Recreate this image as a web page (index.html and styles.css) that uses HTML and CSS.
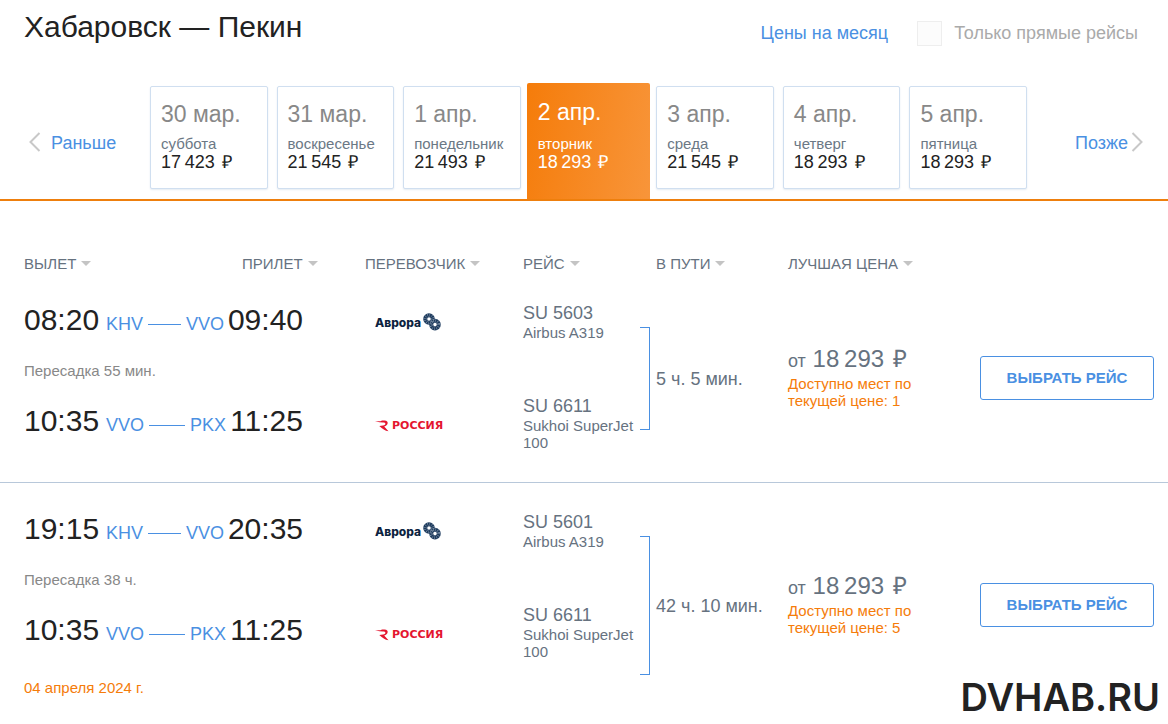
FILE: index.html
```
<!DOCTYPE html>
<html lang="ru">
<head>
<meta charset="utf-8">
<title>Хабаровск — Пекин</title>
<link rel="stylesheet" href="styles.css">
</head>
<body>
<svg class="sprite" aria-hidden="true">
  <symbol id="aurora" viewBox="0 0 18 18">
    <g fill="none" stroke="#1d3a5c" stroke-width="4">
      <circle cx="6" cy="6" r="3.8"/>
      <circle cx="12" cy="11.6" r="3.8"/>
    </g>
    <g fill="none" stroke="#9fb0c2" stroke-width="3.6" stroke-dasharray="0.4 1.6">
      <circle cx="6" cy="6" r="3.8"/>
      <circle cx="12" cy="11.6" r="3.8"/>
    </g>
  </symbol>
  <symbol id="rossiya" viewBox="0 0 14 12">
    <path fill="#e4152f" d="M0 1.2 5.500 1.200 7 .5 9.500.5C12 .6 13 1.800 12.600 3.400 12.300 4.800 11.200 5.800 9.200 6.400L13.500 11.300C10 10.800 7.500 8.800 4.300 5.900L8 5.600C9.800 5.400 10.500 4.600 10.400 3.600 10.300 2.900 9.500 2.600 8 2.500L4.500 2.300Z"/>
  </symbol>
</svg>

<header class="top">
  <h1 class="title">Хабаровск — Пекин</h1>
  <div class="options">
    <a class="link" href="#">Цены на месяц</a>
    <label class="direct"><input class="direct-box" type="checkbox" disabled>Только прямые рейсы</label>
  </div>
</header>

<nav class="dates">
  <a class="link step step-prev" href="#"><svg class="chevron" viewBox="0 0 12 20"><path d="M11 1 2 10l9 9"/></svg>Раньше</a>
  <div class="days">
    <button class="day"><span class="date">30 мар.</span><span class="weekday">суббота</span><span class="fare">17&#8201;423 <span class="rub">₽</span></span></button>
    <button class="day"><span class="date">31 мар.</span><span class="weekday">воскресенье</span><span class="fare">21&#8201;545 <span class="rub">₽</span></span></button>
    <button class="day"><span class="date">1 апр.</span><span class="weekday">понедельник</span><span class="fare">21&#8201;493 <span class="rub">₽</span></span></button>
    <button class="day day-active"><span class="date">2 апр.</span><span class="weekday">вторник</span><span class="fare">18&#8201;293 <span class="rub">₽</span></span></button>
    <button class="day"><span class="date">3 апр.</span><span class="weekday">среда</span><span class="fare">21&#8201;545 <span class="rub">₽</span></span></button>
    <button class="day"><span class="date">4 апр.</span><span class="weekday">четверг</span><span class="fare">18&#8201;293 <span class="rub">₽</span></span></button>
    <button class="day"><span class="date">5 апр.</span><span class="weekday">пятница</span><span class="fare">18&#8201;293 <span class="rub">₽</span></span></button>
  </div>
  <a class="link step step-next" href="#">Позже<svg class="chevron" viewBox="0 0 12 20"><path d="m1 1 9 9-9 9"/></svg></a>
</nav>

<main>
  <table class="flights">
    <colgroup><col class="c-depart"><col class="c-arrive"><col class="c-carrier"><col class="c-flight"><col class="c-duration"><col><col class="c-action"></colgroup>
    <thead>
      <tr>
        <th class="route-cell"><button class="sort">Вылет</button></th>
        <th><button class="sort">Прилет</button></th>
        <th><button class="sort">Перевозчик</button></th>
        <th><button class="sort">Рейс</button></th>
        <th class="duration-head"><button class="sort">В пути</button></th>
        <th><button class="sort">Лучшая цена</button></th>
        <td></td>
      </tr>
    </thead>
    <tbody>
      <tr class="trip">
        <td class="route-cell" colspan="2">
          <div class="leg"><span class="time">08:20</span><span class="port port-from">KHV</span><span class="dash"></span><span class="port port-to">VVO</span><span class="time">09:40</span></div>
          <p class="transfer">Пересадка 55 мин.</p>
          <div class="leg"><span class="time">10:35</span><span class="port port-from">VVO</span><span class="dash"></span><span class="port port-to">PKX</span><span class="time">11:25</span></div>
        </td>
        <td class="carrier-cell">
          <div class="carrier aurora">Аврора<svg class="aurora-mark"><use href="#aurora"/></svg></div>
          <div class="carrier rossiya"><svg class="rossiya-mark"><use href="#rossiya"/></svg>РОССИЯ</div>
        </td>
        <td class="flight-cell">
          <div class="flight"><div class="number">SU 5603</div><div class="plane">Airbus A319</div></div>
          <div class="flight"><div class="number">SU 6611</div><div class="plane">Sukhoi SuperJet 100</div></div>
        </td>
        <td class="duration-cell"><div class="duration"><span class="bracket"></span>5 ч. 5 мин.</div></td>
        <td class="middle">
          <div class="price"><span class="from">от</span> 18&#8201;293 <span class="rub">₽</span></div>
          <p class="seats">Доступно мест по текущей цене: 1</p>
        </td>
        <td class="middle action"><button class="choose">Выбрать рейс</button></td>
      </tr>
      <tr class="trip">
        <td class="route-cell" colspan="2">
          <div class="leg"><span class="time">19:15</span><span class="port port-from">KHV</span><span class="dash"></span><span class="port port-to">VVO</span><span class="time">20:35</span></div>
          <p class="transfer">Пересадка 38 ч.</p>
          <div class="leg"><span class="time">10:35</span><span class="port port-from">VVO</span><span class="dash"></span><span class="port port-to">PKX</span><span class="time">11:25</span></div>
          <p class="next-date">04 апреля 2024 г.</p>
        </td>
        <td class="carrier-cell">
          <div class="carrier aurora">Аврора<svg class="aurora-mark"><use href="#aurora"/></svg></div>
          <div class="carrier rossiya"><svg class="rossiya-mark"><use href="#rossiya"/></svg>РОССИЯ</div>
        </td>
        <td class="flight-cell">
          <div class="flight"><div class="number">SU 5601</div><div class="plane">Airbus A319</div></div>
          <div class="flight"><div class="number">SU 6611</div><div class="plane">Sukhoi SuperJet 100</div></div>
        </td>
        <td class="duration-cell"><div class="duration"><span class="bracket"></span>42 ч. 10 мин.</div></td>
        <td class="middle">
          <div class="price"><span class="from">от</span> 18&#8201;293 <span class="rub">₽</span></div>
          <p class="seats">Доступно мест по текущей цене: 5</p>
        </td>
        <td class="middle action"><button class="choose">Выбрать рейс</button></td>
      </tr>
    </tbody>
  </table>
</main>
<div class="watermark">DVHAB.RU</div>
</body>
</html>
```
FILE: styles.css
```
* { box-sizing: border-box; }

body {
  margin: 0;
  background: #fff;
  color: #222;
  font: 18px/22px "Liberation Sans", Arial, sans-serif;
}

button { font: inherit; color: inherit; text-align: left; cursor: pointer; }
p { margin: 0; }
.sprite { display: none; }
.link { color: #4a90e2; text-decoration: none; }

/* Header */
.top {
  display: flex;
  justify-content: space-between;
  padding: 8px 30px 0 24px;
}
.title { margin: 0; font-size: 30px; line-height: 38px; font-weight: 400; }
.options { display: flex; align-items: center; gap: 29px; padding-top: 12px; }
.direct { display: flex; align-items: center; gap: 12px; color: #aaa; }
.direct-box {
  appearance: none;
  width: 25px;
  height: 25px;
  margin: 0;
  border: 1px solid #eee;
  background: #fcfcfc;
}

/* Date strip */
.dates {
  display: flex;
  padding-top: 40px;
  border-bottom: 2px solid #ee7f0d;
}
.step { display: flex; gap: 10px; padding-top: 46px; }
.step-prev { width: 150px; padding-left: 28px; }
.step-next { width: 141px; gap: 3px; padding-left: 48px; }
.chevron {
  width: 13px;
  height: 20px;
  fill: none;
  stroke: #c8c8c8;
  stroke-width: 2;
}
.days {
  flex: 1;
  display: grid;
  grid-template-columns: repeat(7, 1fr);
  gap: 9px;
}
.day {
  display: flex;
  flex-direction: column;
  margin: 0 0 10px;
  padding: 13px 10px 16px;
  border: 1px solid #d0dff0;
  border-radius: 2px;
  background: #fff;
  box-shadow: 0 1px 2px #e4ebf2;
}
.date { font-size: 23px; line-height: 28px; color: #888; }
.weekday { margin-top: 7px; font-size: 15px; line-height: 17px; color: #6b7885; }
.fare { line-height: 20px; white-space: nowrap; }
.rub { margin-left: 2px; }
.day-active {
  margin: -3px -3px 0;
  padding: 15px 11px;
  border: 0;
  border-radius: 2px 2px 0 0;
  background: linear-gradient(100deg, #f57c0a, #f8953a);
  box-shadow: none;
  color: #fff;
}
.day-active .date, .day-active .weekday { color: #fff; }
.day-active .weekday { margin-top: 9px; }

/* Flights */
.flights {
  width: 100%;
  border-collapse: collapse;
  table-layout: fixed;
  color: #66727f;
}
.c-depart { width: 242px; }
.c-arrive { width: 123px; }
.c-carrier { width: 158px; }
.c-flight { width: 117px; }
.c-duration { width: 148px; }
.c-action { width: 188px; }
.flights th, .flights td { padding: 0; text-align: left; font-weight: 400; vertical-align: top; }
.flights th { padding: 54px 0 2px; }
.flights .route-cell { padding-left: 24px; }
.flights .duration-head { padding-left: 16px; }
.sort {
  display: flex;
  align-items: center;
  gap: 5px;
  padding: 0;
  border: 0;
  background: none;
  font-size: 15px;
  line-height: 17px;
  text-transform: uppercase;
}
.sort::after {
  content: "";
  border: 5px solid transparent;
  border-top-color: #c4c4c4;
  border-bottom: 0;
}
.trip + .trip { border-top: 1px solid #b8c8da; }

.flights .trip .route-cell { padding: 28px 62px 31px 24px; }
.leg { display: flex; align-items: baseline; color: #222; }
.time { font-size: 30px; line-height: 36px; }
.port { color: #4a90e2; }
.port-from { margin-left: 7px; }
.port-to { margin-right: 4px; }
.dash { flex: 1; align-self: center; height: 1px; margin: 8px 5px 0; background: #4a90e2; }
.transfer { margin: 24px 0; font-size: 15px; line-height: 17px; color: #888; }
.next-date { margin-top: 31px; font-size: 15px; line-height: 17px; color: #f57c0a; }

.flights .trip .carrier-cell { padding: 38px 0 0 10px; }
.carrier { display: flex; align-items: center; height: 22px; font-weight: 700; }
.aurora { gap: 2px; color: #0c2340; font: 800 12px/22px Inter, sans-serif; }
.aurora-mark { width: 18px; height: 18px; margin-bottom: 2px; }
.rossiya { gap: 3px; margin-top: 81px; color: #e4152f; font: 700 11px/22px "DejaVu Sans", sans-serif; }
.rossiya-mark { width: 14px; height: 12px; }

.flights .trip .flight-cell { padding: 29px 0 31px; }
.flight + .flight { margin-top: 55px; }
.number { line-height: 21px; }
.plane { font-size: 15px; line-height: 17px; }

.flights .trip .duration-cell { height: 1px; padding: 53px 0 52px; }
.duration { display: flex; align-items: center; gap: 6px; height: 100%; }
.bracket {
  align-self: stretch;
  width: 10px;
  border: 1px solid #4a90e2;
  border-left: 0;
}

.flights .trip .middle { padding-bottom: 3px; vertical-align: middle; }
.price { font-size: 24px; line-height: 28px; }
.from { font-size: 18px; }
.seats { max-width: 140px; font-size: 15px; line-height: 17px; color: #f57c0a; }
.flights .trip .action { padding: 0 14px 0 0; }
.choose {
  display: block;
  width: 100%;
  padding: 10px;
  border: 1px solid #4a90e2;
  border-radius: 3px;
  background: #fff;
  color: #4a90e2;
  font-size: 15px;
  font-weight: 700;
  text-align: center;
  text-transform: uppercase;
}

.watermark {
  position: absolute;
  right: 8px;
  bottom: 4px;
  color: #222;
  font: 600 38px/46px Inter, sans-serif;
}
```
